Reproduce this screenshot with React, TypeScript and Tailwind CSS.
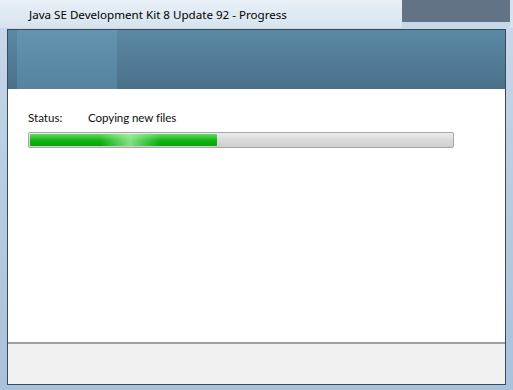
export default function App() {
  return (
    <div
      className="flex h-[390px] w-[513px] flex-col bg-gradient-to-b from-[#c9d9ea] via-[#b6cce2] to-[#a9c1da] text-[12px] text-black"
      style={{ fontFamily: '"Segoe UI", "Noto Sans", "Open Sans", sans-serif' }}
    >
      {/* Title bar */}
      <div className="flex h-[29px] shrink-0 items-start">
        <div className="flex h-[28px] flex-1 items-center bg-gradient-to-b from-[#e9f0f7] to-[#d6e3ef] pl-[29px] pt-[1px]">
          <span className="text-[11.6px] leading-none">Java SE Development Kit 8 Update 92 - Progress</span>
        </div>
        <div className="h-[22px] w-[108px] bg-[#617384]" />
        <div className="h-[28px] w-[3px] bg-[#d6e3ef]" />
      </div>

      {/* Client area */}
      <div className="mx-[7px] flex flex-1 flex-col border border-[#3c4a58] bg-white">
        {/* Banner */}
        <div className="flex h-[59px] shrink-0 bg-gradient-to-b from-[#5a89a4] to-[#4a7089]">
          <div className="ml-[9px] w-[100px] bg-gradient-to-b from-[#6394ae] to-[#5583a0]" />
        </div>

        {/* Content */}
        <div className="flex flex-1 flex-col px-[20px] pt-[21px]" style={{ fontFamily: 'Lato, "Noto Sans", sans-serif' }}>
          <div className="flex h-[16px] items-center text-[11.6px] text-[#111]">
            <span className="w-[60px]">Status:</span>
            <span className="tracking-[-0.1px]">Copying new files</span>
          </div>
          <div className="mt-[6px] h-[16px] w-[426px] rounded-[2px] border border-[#a6a6a6] bg-gradient-to-b from-[#ececec] via-[#dadada] to-[#cfcfcf] p-[1px]">
            <div className="relative h-full w-[187px] overflow-hidden rounded-[1px] bg-gradient-to-b from-[#5fd95f] via-[#0fb80f] to-[#0aa20a]">
              <div className="absolute inset-y-0 left-[70px] w-[60px] bg-gradient-to-r from-transparent via-[#b6f5b6]/70 to-transparent" />
            </div>
          </div>
        </div>

        {/* Bottom button bar */}
        <div className="h-[42px] shrink-0 border-t-2 border-[#a0a0a0] bg-[#f0f0f0]" />
      </div>
      <div className="h-[5px] shrink-0" />
    </div>
  );
}
